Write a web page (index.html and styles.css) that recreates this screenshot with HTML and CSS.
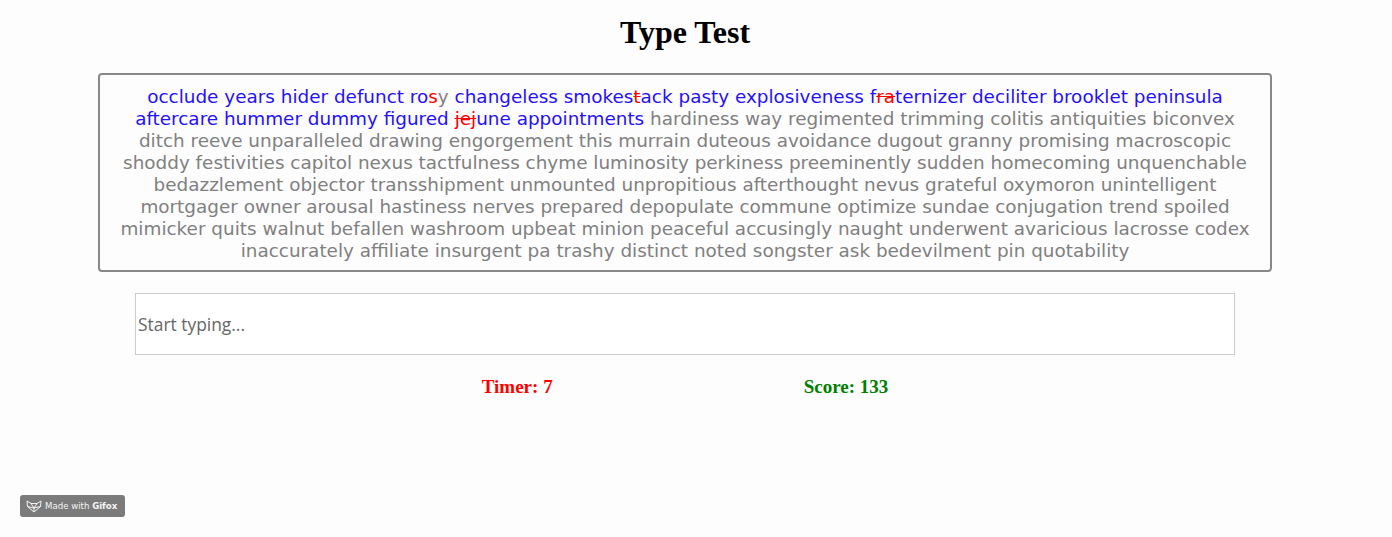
FILE: index.html
```html
<!DOCTYPE html>
<html>
<head>
<meta charset="utf-8">
<link rel="stylesheet" href="styles.css">
</head>
<body>
<main class="app">
  <h1 class="title">Type Test</h1>
  <div class="words">
    <span class="ok">occlude years hider defunct ro</span><span class="bad">s</span><span class="todo">y</span> <span class="ok">changeless smokes</span><span class="bad strike">t</span><span class="ok">ack pasty explosiveness f</span><span class="bad strike">ra</span><span class="ok">ternizer deciliter brooklet peninsula</span><br>
    <span class="ok">aftercare hummer dummy figured</span> <span class="bad strike">jej</span><span class="ok">une appointments</span>
    <span class="todo">hardiness way regimented trimming colitis antiquities biconvex<br>
    ditch reeve unparalleled drawing engorgement this murrain duteous avoidance dugout granny promising macroscopic<br>
    shoddy festivities capitol nexus tactfulness chyme luminosity perkiness preeminently sudden homecoming unquenchable<br>
    bedazzlement objector transshipment unmounted unpropitious afterthought nevus grateful oxymoron unintelligent<br>
    mortgager owner arousal hastiness nerves prepared depopulate commune optimize sundae conjugation trend spoiled<br>
    mimicker quits walnut befallen washroom upbeat minion peaceful accusingly naught underwent avaricious lacrosse codex<br>
    inaccurately affiliate insurgent pa trashy distinct noted songster ask bedevilment pin quotability</span>
  </div>
  <input class="entry" type="text" placeholder="Start typing...">
  <div class="stats">
    <span class="timer">Timer: 7</span>
    <span class="score">Score: 133</span>
  </div>
</main>
<div class="badge">
  <svg class="fox" width="16" height="13" viewBox="0 0 16 13"><path d="M1 1 L5 3.5 L11 3.5 L15 1 L14.5 6.5 L8 12 L1.5 6.5 Z M5 3.5 L8 8 L11 3.5 M1.5 6.5 L8 8 L14.5 6.5 M8 8 L8 12" fill="none" stroke="#fff" stroke-width="0.9" stroke-linejoin="round"/></svg>
  <span>Made with <b>Gifox</b></span>
</div>
</body>
</html>
```
FILE: styles.css
```css
html, body {
  margin: 0;
  padding: 0;
  background: #fdfdfd;
}
.app {
  width: 1370px;
  display: flex;
  flex-direction: column;
  align-items: center;
}
.title {
  font-family: "Liberation Serif", serif;
  font-size: 32px;
  font-weight: bold;
  margin: 14px 0 22px;
  line-height: 37px;
  color: #000;
}
.words {
  box-sizing: border-box;
  width: 1174px;
  border: 2px solid #888;
  border-radius: 4px;
  padding: 11px 8px 8px;
  font-family: "DejaVu Sans", Verdana, sans-serif;
  font-size: 18.4px;
  line-height: 22px;
  text-align: center;
  color: #808080;
  white-space: nowrap;
}
.ok { color: #2410ff; }
.bad { color: #ff0000; }
.strike { text-decoration: line-through; }
.todo { color: #808080; }
.entry {
  box-sizing: border-box;
  margin-top: 21px;
  width: 1100px;
  height: 62px;
  border: 1px solid #cccccc;
  background: #fff;
  padding: 0 2px;
  font-family: "Open Sans", sans-serif;
  font-size: 17.4px;
  outline: none;
}
.entry::placeholder { color: #666; }
.stats {
  margin-top: 21px;
  display: flex;
  gap: 251px;
  font-family: "Liberation Serif", serif;
  font-weight: bold;
  font-size: 19px;
}
.timer { color: #ff0000; }
.score { color: #008000; }
.badge {
  position: fixed;
  left: 20px;
  top: 495px;
  width: 105px;
  height: 22px;
  box-sizing: border-box;
  border-radius: 3px;
  background: #7b7b7b;
  color: #f4f4f4;
  display: flex;
  align-items: center;
  gap: 3px;
  padding-left: 6px;
  font-family: "DejaVu Sans", sans-serif;
  font-size: 8.6px;
}
.badge b { font-weight: bold; }
```
